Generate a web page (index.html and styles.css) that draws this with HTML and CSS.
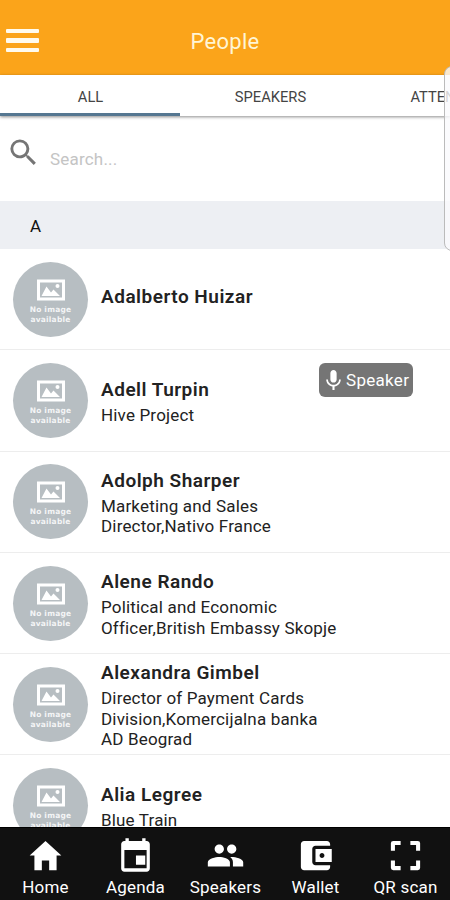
FILE: index.html
```
<!DOCTYPE html>
<html lang="en">

<head>
    <meta charset="utf-8" />
    <title>People</title>
    <link rel="stylesheet" href="styles.css">
</head>

<body>
    <!-- shared placeholder picture -->
    <svg class="defs" width="0" height="0">
        <symbol id="photo" viewBox="0 0 28 22">
            <path fill-rule="evenodd" d="M0 .5h28v21H0zM3 3.5v15h22v-15z" />
            <path d="M4.500 17l5-9.500 4.500 6 2.500-3 6.500 6.500z" />
            <circle cx="20.500" cy="7" r="2" />
        </symbol>
    </svg>

    <div class="app">
        <header class="header">
            <div class="burger"><span></span><span></span><span></span></div>
            <h1>People</h1>
        </header>

        <nav class="tabs">
            <div class="tab active">ALL</div>
            <div class="tab">SPEAKERS</div>
            <div class="tab">ATTENDEES</div>
        </nav>

        <div class="search">
            <svg viewBox="0 0 24 24" width="35" height="35"><path d="M15.500 14h-.79l-.28-.27A6.471 6.471 0 0 0 16 9.500 6.500 6.500 0 1 0 9.500 16c1.610 0 3.090-.59 4.230-1.570l.27.28v.79l5 4.990L20.490 19l-4.990-5zm-6 0C7.010 14 5 11.990 5 9.500S7.010 5 9.500 5 14 7.010 14 9.500 11.990 14 9.500 14z" /></svg>
            <span>Search...</span>
        </div>

        <div class="letter">A</div>

        <main class="list">
            <div class="person">
                <div class="avatar"><svg><use href="#photo" /></svg><span>No image<br>available</span></div>
                <div class="text">
                    <h2>Adalberto Huizar</h2>
                </div>
            </div>
            <div class="person">
                <div class="avatar"><svg><use href="#photo" /></svg><span>No image<br>available</span></div>
                <div class="text">
                    <h2>Adell Turpin</h2>
                    <p>Hive Project</p>
                </div>
                <div class="badge">
                    <svg viewBox="0 0 24 24" width="25" height="25"><path d="M12 14c1.660 0 3-1.340 3-3V5c0-1.660-1.340-3-3-3S9 3.340 9 5v6c0 1.660 1.340 3 3 3zm5.300-3c0 3-2.540 5.100-5.300 5.100S6.700 14 6.700 11H5c0 3.410 2.720 6.230 6 6.720V21h2v-3.280c3.280-.48 6-3.300 6-6.720z" /></svg>
                    <span>Speaker</span>
                </div>
            </div>
            <div class="person">
                <div class="avatar"><svg><use href="#photo" /></svg><span>No image<br>available</span></div>
                <div class="text">
                    <h2>Adolph Sharper</h2>
                    <p>Marketing and Sales<br>Director,Nativo France</p>
                </div>
            </div>
            <div class="person">
                <div class="avatar"><svg><use href="#photo" /></svg><span>No image<br>available</span></div>
                <div class="text">
                    <h2>Alene Rando</h2>
                    <p>Political and Economic<br>Officer,British Embassy Skopje</p>
                </div>
            </div>
            <div class="person">
                <div class="avatar"><svg><use href="#photo" /></svg><span>No image<br>available</span></div>
                <div class="text">
                    <h2>Alexandra Gimbel</h2>
                    <p>Director of Payment Cards<br>Division,Komercijalna banka<br>AD Beograd</p>
                </div>
            </div>
            <div class="person">
                <div class="avatar"><svg><use href="#photo" /></svg><span>No image<br>available</span></div>
                <div class="text">
                    <h2>Alia Legree</h2>
                    <p>Blue Train</p>
                </div>
            </div>
        </main>

        <footer class="bottom">
            <div class="item">
                <svg viewBox="0 0 512 512"><path d="M208 448V320h96v128h97.600V256H464L256 64 48 256h62.400v192z" /></svg>
                <span>Home</span>
            </div>
            <div class="item">
                <svg viewBox="0 0 512 512"><path d="M384 256H262v122h122V256zM344 28v38H168V28h-44v38h-14c-24 0-42 18-42 42v320c0 24 18 42 42 42h292c24 0 42-18 42-42V108c0-24-18-42-42-42h-14V28h-44zm58 396H110V184h292v240z" /></svg>
                <span>Agenda</span>
            </div>
            <div class="item">
                <svg viewBox="0 0 512 512"><path d="M337.500 232c33.600 0 61-27 61-60s-27.400-60-61-60-61 27-61 60 27.400 60 61 60zm-163 0c33.600 0 61-27 61-60s-27.400-60-61-60-61 27-61 60 27.400 60 61 60zm0 44C126.700 276 24 299 24 346v54h290v-54c0-47-92-70-139.500-70zm163 0c-6 0-12 .4-19 1.500 24 17 35 38.500 35 68.500v54h135v-54c0-47-103-70-151-70z" /></svg>
                <span>Speakers</span>
            </div>
            <div class="item">
                <svg viewBox="0 0 24 24"><path d="M21 18v1c0 1.100-.9 2-2 2H5c-1.110 0-2-.9-2-2V5c0-1.100.89-2 2-2h14c1.100 0 2 .9 2 2v1h-9c-1.110 0-2 .9-2 2v8c0 1.100.89 2 2 2h9zm-9-2h10V8H12v8zm4-2.500c-.83 0-1.500-.67-1.500-1.500s.67-1.500 1.500-1.500 1.500.67 1.500 1.500-.67 1.500-1.500 1.500z" /></svg>
                <span>Wallet</span>
            </div>
            <div class="item">
                <svg viewBox="0 0 24 24"><path d="M3 9V4.500Q3 3 4.500 3H9v2.500H5.500V9zM15 3h4.500Q21 3 21 4.500V9h-2.500V5.500H15zM3 15h2.500v3.500H9V21H4.500Q3 21 3 19.500zM18.500 15H21v4.500q0 1.500-1.500 1.500H15v-2.500h3.500z" /></svg>
                <span>QR scan</span>
            </div>
        </footer>

        <!-- edge panel sliding in over the page -->
        <div class="edge"></div>
    </div>
</body>

</html>
```
FILE: styles.css
```
* {
    box-sizing: border-box;
}

body {
    margin: 0;
    font-family: Roboto, "Liberation Sans", sans-serif;
    color: #222;
}

.defs {
    position: absolute;
}

.app {
    position: relative;
    display: flex;
    flex-direction: column;
    width: 450px;
    height: 900px;
    overflow: hidden;
    background-color: #fff;
}

.header {
    display: grid;
    grid-template-columns: 39px 1fr 39px;
    align-items: center;
    flex: none;
    height: 75px;
    padding: 7px 0 0;
    background-color: #fba41a;
}

.header h1 {
    margin: 0;
    text-align: center;
    font-size: 22px;
    font-weight: 400;
    letter-spacing: 0.3px;
    color: #fff5d5;
}

.burger {
    display: flex;
    flex-direction: column;
    gap: 5px;
    width: 33px;
    margin: 0 0 1px 6px;
}

.burger span {
    height: 4.4px;
    border-radius: 1px;
    background-color: #fffbee;
}

.tabs {
    display: flex;
    flex: none;
    height: 41px;
    box-shadow: 0 1px 3px rgba(0, 0, 0, 0.45);
}

.tab {
    flex: none;
    width: 180px;
    padding: 2px 0 0 1px;
    line-height: 40px;
    text-align: center;
    font-size: 14.7px;
    color: #444;
}

.tab.active {
    border-bottom: 3px solid #557791;
}

.search {
    display: flex;
    flex: none;
    height: 85px;
    padding: 19px 0 0 6px;
}

.search svg {
    fill: #757575;
}

.search span {
    margin: 14px 0 0 9px;
    font-size: 17px;
    line-height: 20px;
    letter-spacing: 0.2px;
    color: #c4c4c4;
}

.letter {
    flex: none;
    height: 48px;
    padding-left: 30px;
    line-height: 51px;
    font-size: 17px;
    color: #111;
    background-color: #edeff3;
}

.list {
    flex: 1;
    min-height: 0;
    overflow: hidden;
}

.person {
    position: relative;
    display: flex;
    align-items: center;
    height: 101.3px;
    padding-left: 13px;
    border-bottom: 1px solid #ededed;
}

.avatar {
    display: flex;
    flex-direction: column;
    align-items: center;
    flex: none;
    width: 75px;
    height: 75px;
    padding-top: 17px;
    border-radius: 50%;
    background-color: #b7bec2;
    color: #fff;
}

.avatar svg {
    width: 28px;
    height: 22px;
    fill: #fff;
}

.avatar span {
    margin-top: 4px;
    text-align: center;
    font-family: "DejaVu Sans", sans-serif;
    font-size: 7.5px;
    font-weight: 700;
    line-height: 10px;
    letter-spacing: 0.2px;
    color: #f4f5f6;
}

.text {
    margin-left: 13px;
    padding-top: 1.5px;
}

.text h2 {
    margin: 0;
    font-size: 19px;
    font-weight: 600;
    line-height: 25px;
    letter-spacing: 0.5px;
}

.text h2:only-child {
    margin-bottom: 6px;
}

.text p {
    margin: 3px 0 0;
    font-size: 17px;
    line-height: 20.5px;
    letter-spacing: 0.17px;
    white-space: nowrap;
}

.badge {
    position: absolute;
    top: 13px;
    right: 37px;
    display: flex;
    align-items: center;
    width: 94px;
    height: 34px;
    padding-left: 2px;
    border-radius: 6px;
    background-color: #757575;
    color: #fff;
    font-size: 17px;
    letter-spacing: 0.3px;
}

.badge svg {
    fill: #fff;
}

.bottom {
    display: flex;
    flex: none;
    height: 73px;
    border-top: 1px solid #000;
    background-color: #111;
    color: #fff;
}

.item {
    display: flex;
    flex: 1 0 90px;
    flex-direction: column;
    align-items: center;
    padding-top: 7.5px;
}

.item svg {
    width: 39px;
    height: 39px;
    fill: #fff;
}

.item span {
    margin-top: 2.5px;
    padding-left: 1px;
    font-size: 17px;
    line-height: 20px;
    letter-spacing: 0.2px;
}

.edge {
    position: absolute;
    top: 66px;
    left: 444px;
    width: 20px;
    height: 185px;
    border: 1px solid #bbb;
    border-radius: 8px;
    background-color: rgba(250, 250, 252, 0.8);
}
```
